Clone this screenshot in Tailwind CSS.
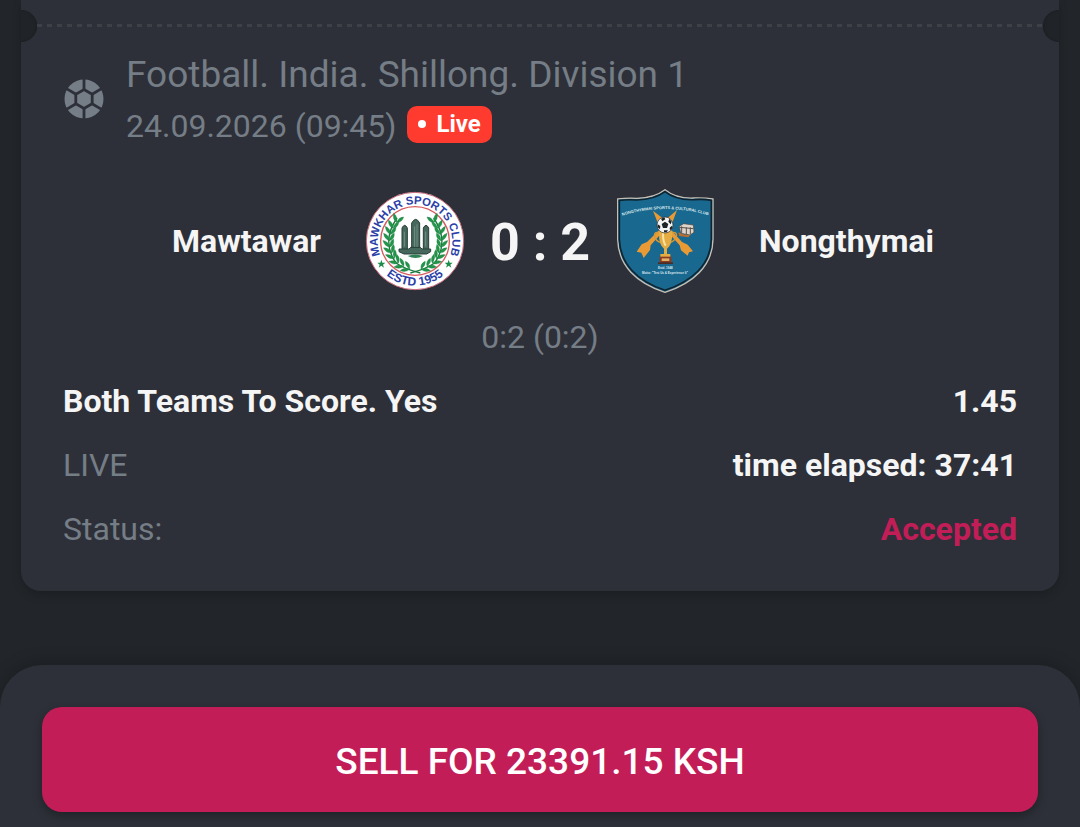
<!DOCTYPE html>
<html lang="en">
<head>
    <meta charset="UTF-8">
    <meta name="viewport" content="width=device-width, initial-scale=1.0">
    <title>Bet details</title>
    <script src="https://cdn.jsdelivr.net/npm/@tailwindcss/browser@4"></script>
</head>
<body class="bg-[#22262a] font-[Roboto,sans-serif] text-[32px] text-[#757d86]">
    <div class="flex min-h-screen flex-col">
        <!-- Bet card -->
        <main class="relative mx-[21px] mb-[74px] rounded-b-[20px] bg-[#2d3038] px-[42px] pt-6 pb-[30px] shadow-[0_4px_10px_rgba(0,0,0,0.2)]">
            <!-- Ticket notches and tear line -->
            <div class="absolute top-[10px] -left-4 size-8 rounded-full bg-[#202428] [clip-path:inset(0_0_0_16px)] shadow-[inset_-1px_0_2px_#1b1f23]"></div>
            <div class="absolute top-[10px] -right-4 size-8 rounded-full bg-[#202428] [clip-path:inset(0_16px_0_0)] shadow-[inset_1px_0_2px_#1b1f23]"></div>
            <div class="-mx-[26px] h-[3px] bg-[repeating-linear-gradient(90deg,#3d4046_0_5px,transparent_5px_10px)]"></div>

            <!-- Event -->
            <header class="mt-[22px] flex items-center gap-[21px]">
                <svg class="size-[42px] shrink-0" viewBox="0 0 42 42" fill="#757d86" aria-hidden="true">
                    <circle cx="21" cy="20" r="19.5"/>
                    <g stroke="#2d3038" stroke-width="2.8">
                        <path d="M21 10.5 29.2 15.2v9.6L21 29.5l-8.2-4.7v-9.6z"/>
                        <path d="M21 11V-1M21 29v12M29 15.2l10-5.8M29 24.8l10 5.8M13 24.8 3 30.6M13 15.2 3 9.4" fill="none"/>
                    </g>
                </svg>
                <div>
                    <h1 class="text-[37px] leading-[52px]">Football. India. Shillong. Division 1</h1>
                    <div class="flex h-[50px] items-center gap-[11px]">
                        <time datetime="2026-09-24T09:45">24.09.2026 (09:45)</time>
                        <span class="mb-1 flex h-[37px] items-center gap-[10px] rounded-[10px] bg-[#ff3b30] px-[11px] text-[24px] font-bold text-white">
                            <span class="size-2 rounded-full bg-white"></span>Live
                        </span>
                    </div>
                </div>
            </header>

            <!-- Teams and score -->
            <section class="mt-[26px] flex h-32 items-center gap-[44px] font-bold text-[#f5f5f6]">
                <h2 class="flex-1 text-right">Mawtawar</h2>
                <div class="flex w-[350px] items-center justify-between">
                    <svg class="size-[100px]" viewBox="32 34 300 300" role="img" aria-label="Mawkhar Sports Club">
                        <defs>
                            <path id="ring-top" d="M76 222A112 112 0 1 1 288 222"/>
                            <path id="ring-bottom" d="M82 273A134 134 0 0 0 282 273"/>
                            <path id="leaf" d="M0 0Q-15-5-16-24Q-1-18 0 0Q3-18 16-21Q16-4 0 0"/>
                        </defs>
                        <circle cx="182" cy="184" r="146" fill="#fff" stroke="#c9687a" stroke-width="3"/>
                        <circle cx="182" cy="184" r="103" fill="#fff" stroke="#d65a5e" stroke-width="4"/>
                        <g id="branch" fill="#21954a" stroke="#1a7a3c" stroke-width="1">
                            <path d="M128 115Q80 185 125 250Q150 268 198 280" fill="none" stroke-width="4"/>
                            <use href="#leaf" transform="translate(127 128) rotate(15)"/>
                            <use href="#leaf" transform="translate(116 146) rotate(5)"/>
                            <use href="#leaf" transform="translate(109 164)"/>
                            <use href="#leaf" transform="translate(106 183) rotate(-6)"/>
                            <use href="#leaf" transform="translate(107 202) rotate(-14)"/>
                            <use href="#leaf" transform="translate(112 220) rotate(-24)"/>
                            <use href="#leaf" transform="translate(120 236) rotate(-34)"/>
                            <use href="#leaf" transform="translate(132 250) rotate(-48)"/>
                            <use href="#leaf" transform="translate(148 260) rotate(-60)"/>
                            <use href="#leaf" transform="translate(166 268) rotate(-66)"/>
                        </g>
                        <use href="#branch" transform="matrix(-1 0 0 1 366 0)"/>
                        <g fill="#2b3fa8" font-size="34" font-weight="700" font-family="Liberation Sans, sans-serif">
                            <text text-anchor="middle"><textPath href="#ring-top" startOffset="50%">MAWKHAR SPORTS CLUB</textPath></text>
                            <text text-anchor="middle" font-size="36"><textPath href="#ring-bottom" startOffset="50%">ESTD 1955</textPath></text>
                        </g>
                        <g fill="#1d8a49">
                            <path id="star" d="M81 240l3 9 9 0-7 6 3 9-8-6-8 6 3-9-7-6 9 0z"/>
                            <use href="#star" x="202"/>
                        </g>
                        <g fill="#47685c" stroke="#263f38" stroke-width="3">
                            <path d="M143 212v-67q8-16 16 0v67zM172 212v-82q12-22 24 0v82zM207 212v-67q8-16 16 0v67z"/>
                            <path d="M134 208h30l5-5h29l5 5h26v8l-12 7h-68l-15-7z"/>
                        </g>
                        <path d="M150 156v45M181 140v62M188 134v68M214 156v45" stroke="#8aa398" stroke-width="2"/>
                        <path d="M160 229q22-9 46 0q-22 12-46 0z" fill="#2f8055"/>
                    </svg>
                    <p class="pt-1 text-[52px] leading-none">0 : 2</p>
                    <svg class="h-[104px] w-[100px]" viewBox="32 27 300 312" role="img" aria-label="Nongthymai Sports and Cultural Club">
                        <defs>
                            <path id="shield-top" d="M54 107Q182 68 312 106"/>
                        </defs>
                        <path d="M182 29Q215 56 268 54Q302 53 326 57V178C325 258 266 310 182 337C98 310 42 258 40 178V57Q70 53 97 55Q150 54 182 29z" fill="#18688f" stroke="#c7bfb5" stroke-width="4"/>
                        <path d="M182 35Q215 61 268 59Q300 57 321 61V178C320 254 262 304 182 331C102 304 47 254 45 178V61Q70 58 97 60Q150 59 182 35z" fill="none" stroke="#10242f" stroke-width="5"/>
                        <text fill="#dfe9ee" font-size="12" font-weight="700" text-anchor="middle" font-family="Liberation Sans, sans-serif"><textPath href="#shield-top" startOffset="50%">NONGTHYMMAI SPORTS &amp; CULTURAL CLUB</textPath></text>
                        <!-- Crossed arrows -->
                        <g fill="#e99a35">
                            <path d="M146 92l28 22 6 20-16 4zM218 90l-28 24-7 20 17 5z"/>
                            <path d="M164 151l8 8-33 37-2 14-19 24-7-16-14-3 15-22 16-7z"/>
                            <path d="M201 151l-8 8 33 37 4 15 20 16 4-10 12-3-16-20-17-8z"/>
                        </g>
                        <!-- Drum -->
                        <path d="M225 139l13-8 29 4 2 22-12 8-28-5z" fill="#ddd5cb" stroke="#4c4641" stroke-width="2"/>
                        <path d="M226 142l41 4M232 139v20M246 142v20M258 142v20" stroke="#5b5049" stroke-width="3"/>
                        <path d="M222 157q18 10 36 7l-6 8-27-4z" fill="#b96e31"/>
                        <!-- Cup and ball -->
                        <path d="M163 158q-16-3-12 13 4 13 20 17M203 158q17-3 13 13-5 13-21 17" fill="none" stroke="#d49a35" stroke-width="4"/>
                        <path d="M164 152h40q1 42-16 54v16h10v10h-30v-10h11v-16q-17-12-15-54z" fill="#e5ac43"/>
                        <path d="M176 160q0 27 8 37" fill="none" stroke="#fbe4a2" stroke-width="6"/>
                        <path d="M166 230h35v18h-35z" fill="#8b3a20"/>
                        <path d="M172 235h23v8h-23z" fill="#e1b168"/>
                        <path d="M161 247h45v5h-45z" fill="#4e2c21"/>
                        <circle cx="182" cy="135" r="24" fill="#f4f4f4" stroke="#272727" stroke-width="2"/>
                        <path d="M182 125l10 7-4 12h-12l-4-12zM170 116l10-4 3 6-9 6zM195 116l7 9-3 8-7-8zM160 133l8 5-1 10-7-6zM203 137l-7 6 1 8 7-6zM179 151l12 0-4 6h-8z" fill="#1c2226"/>
                        <g fill="#dfe9ee" font-weight="700" text-anchor="middle" font-family="Liberation Sans, sans-serif">
                            <text x="183" y="266" font-size="9">Estd. 1948</text>
                            <text x="182" y="281" font-size="9">Motto: "Test Us &amp; Experience It"</text>
                        </g>
                    </svg>
                </div>
                <h2 class="flex-1">Nongthymai</h2>
            </section>
            <p class="text-center leading-[64px]">0:2 (0:2)</p>

            <!-- Bet info -->
            <dl class="leading-[64px]">
                <div class="flex justify-between font-bold text-[#f5f5f6]">
                    <dt>Both Teams To Score. Yes</dt>
                    <dd>1.45</dd>
                </div>
                <div class="flex justify-between">
                    <dt>LIVE</dt>
                    <dd class="font-bold text-[#f5f5f6]">time elapsed: 37:41</dd>
                </div>
                <div class="flex justify-between">
                    <dt>Status:</dt>
                    <dd class="font-bold text-[#c31d58]">Accepted</dd>
                </div>
            </dl>
        </main>

        <!-- Sell bar -->
        <footer class="mt-auto rounded-t-[42px] bg-[#2d3038] px-[42px] pt-[42px] pb-[15px] shadow-[0_-4px_16px_rgba(0,0,0,0.2)]">
            <button type="button" class="h-[105px] w-full rounded-[20px] bg-[#c31d58] pt-1 text-[37px] font-medium text-white shadow-[0_4px_10px_rgba(0,0,0,0.3)]">SELL FOR 23391.15 KSH</button>
        </footer>
    </div>
</body>
</html>
